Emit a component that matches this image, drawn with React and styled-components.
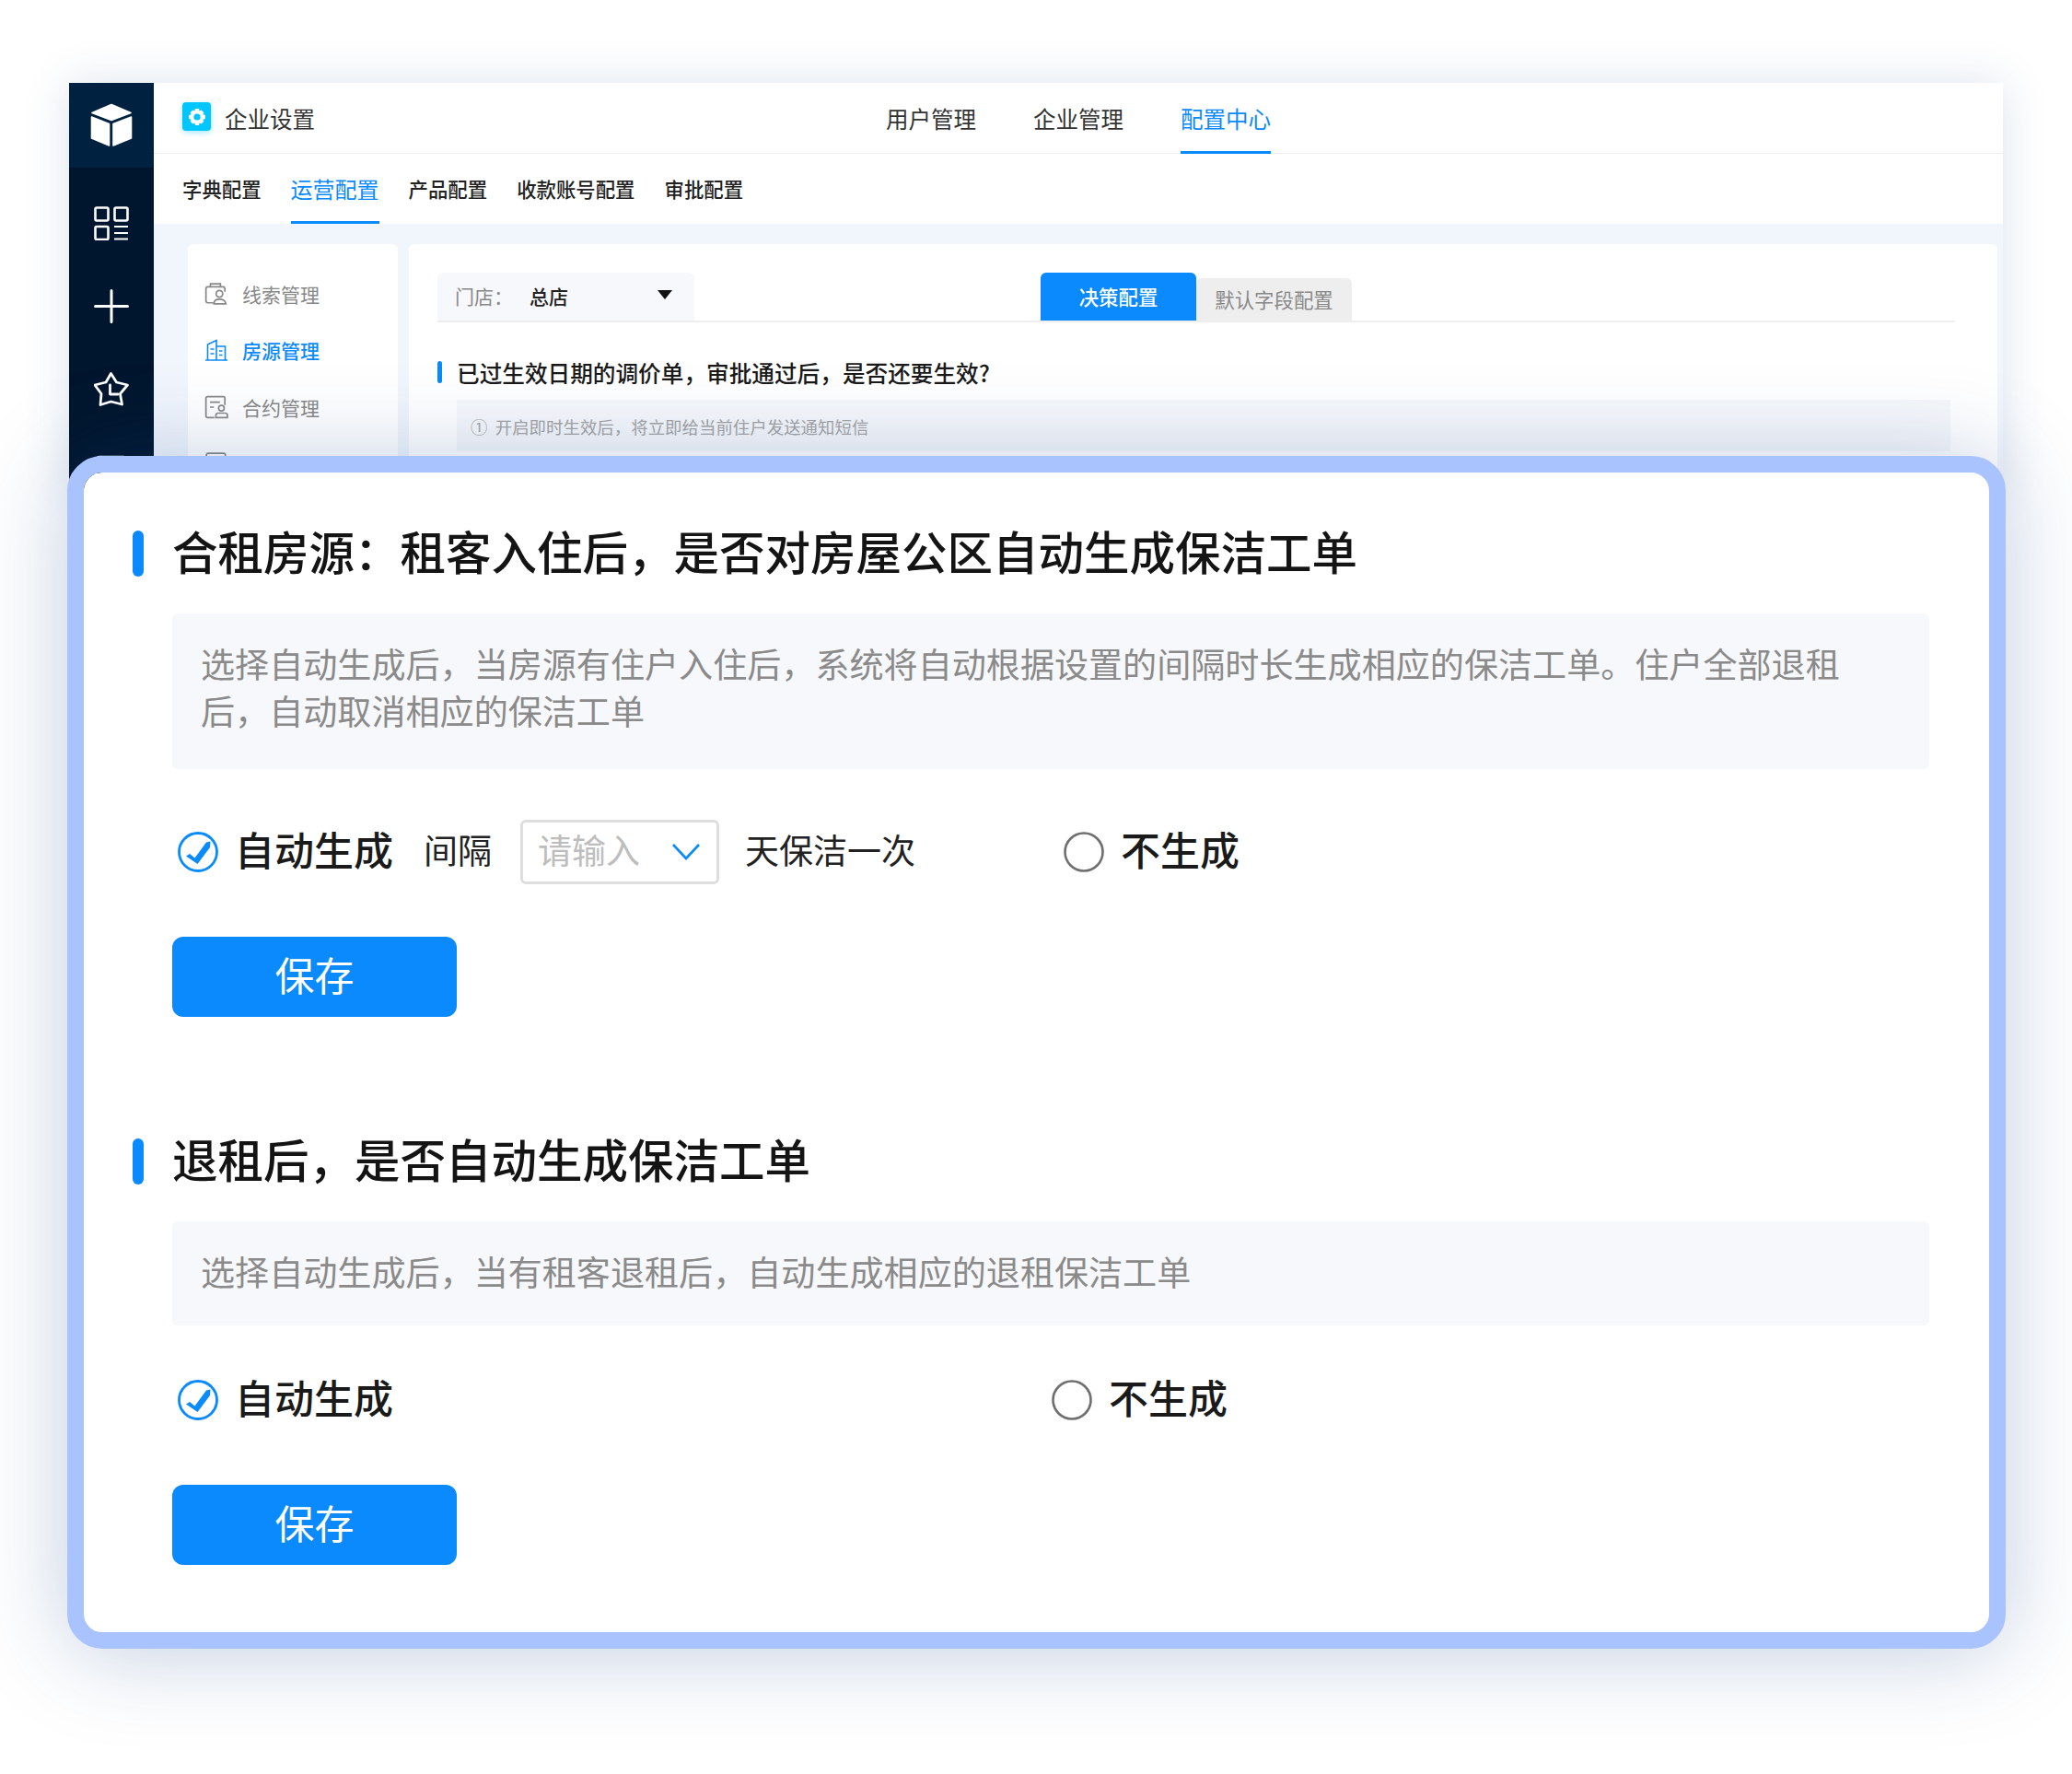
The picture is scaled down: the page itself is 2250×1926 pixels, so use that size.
import React from 'react';
import styled, { createGlobalStyle } from 'styled-components';

const Global = createGlobalStyle`
  html, body { margin: 0; padding: 0; background: #fff; }
  * { box-sizing: border-box; }
  body { font-family: "Noto Sans CJK SC", "Noto Sans", sans-serif; color: #1a1a1a; }
`;

const BLUE = '#0a8afc';

const Page = styled.div`
  width: 2250px;
  height: 1926px;
  padding: 90px 75px 0;
  overflow: hidden;
`;

/* ---------- back window ---------- */
const Win = styled.div`
  width: 2100px;
  height: 440px;
  display: flex;
  overflow: hidden;
  background: #f1f5fc;
  box-shadow: 0 0 46px rgba(40, 80, 140, 0.16);
`;
const Side = styled.aside`
  width: 92px;
  flex: none;
  background: #00162e;
  display: flex;
  flex-direction: column;
  align-items: center;
  overflow: hidden;
`;
const SideLogo = styled.div`
  width: 100%;
  height: 92px;
  flex: none;
  background: #00213f;
  display: flex;
  align-items: center;
  justify-content: center;
  margin-bottom: 42px;
`;
const SideIcon = styled.div`
  height: 37px;
  flex: none;
  margin-bottom: 53px;
  display: flex;
`;
const Main = styled.div`
  flex: 1;
  min-width: 0;
  display: flex;
  flex-direction: column;
`;
const Header = styled.header`
  height: 77px;
  background: #fff;
  border-bottom: 1px solid #eceef1;
  display: flex;
  justify-content: space-between;
  padding: 0 795px 0 31px;
`;
const Brand = styled.div`
  display: flex;
  align-items: center;
  gap: 15px;
  font-size: 24.5px;
  color: #333;
  line-height: 77px;
`;
const BrandMark = styled.div`
  width: 31px;
  height: 31px;
  border-radius: 4px;
  background: #00c6ff;
  box-shadow: 0 2px 6px rgba(0, 190, 255, 0.35);
  display: flex;
  align-items: center;
  justify-content: center;
  margin-top: -3px;
`;
const TopNav = styled.nav`
  display: flex;
  gap: 62px;
`;
const TopItem = styled.div`
  height: 77px;
  line-height: 78px;
  font-size: 24.5px;
  white-space: nowrap;
  color: ${p => (p.$on ? BLUE : '#333')};
  border-bottom: 3px solid ${p => (p.$on ? BLUE : 'transparent')};
`;
const SubNav = styled.nav`
  height: 76px;
  background: #fff;
  display: flex;
  align-items: stretch;
  gap: 32px;
  padding-left: 31px;
`;
const SubItem = styled.div`
  font-size: ${p => (p.$on ? '24px' : '21.4px')};
  font-weight: ${p => (p.$on ? 400 : 500)};
  line-height: 76px;
  height: 76px;
  white-space: nowrap;
  color: ${p => (p.$on ? BLUE : '#222')};
  border-bottom: 3px solid ${p => (p.$on ? BLUE : 'transparent')};
`;
const Body = styled.div`
  flex: 1;
  display: flex;
  gap: 12px;
  padding: 22px 6px 0 37px;
`;
const Menu = styled.div`
  width: 228px;
  flex: none;
  background: #fff;
  border-radius: 6px 6px 0 0;
  padding: 23px 0 0 18px;
`;
const MenuItem = styled.div`
  height: 61.5px;
  display: flex;
  align-items: center;
  gap: 15px;
  font-size: 21px;
  color: ${p => (p.$on ? BLUE : '#888')};
  font-weight: ${p => (p.$on ? 500 : 400)};
`;
const MenuGlyph = styled.svg`
  width: 26px;
  height: 26px;
  flex: none;
  fill: none;
  stroke: ${p => (p.$on ? BLUE : '#888')};
  stroke-width: 1.6;
`;
const Content = styled.div`
  flex: 1;
  background: #fff;
  border-radius: 6px 6px 0 0;
  padding: 31px 46px 0 31px;
`;
const TabBar = styled.div`
  height: 54px;
  display: flex;
  align-items: flex-end;
  border-bottom: 2px solid #eee;
`;
const Store = styled.div`
  width: 279px;
  height: 52px;
  background: #f7f8fb;
  border-radius: 6px 6px 0 0;
  display: flex;
  align-items: center;
  padding: 0 24px 2px 19px;
  font-size: 21px;
  color: #888;
`;
const StoreValue = styled.span`
  flex: 1;
  margin-left: 18px;
  color: #222;
  font-weight: 500;
`;
const Caret = styled.span`
  width: 0;
  height: 0;
  border-left: 8px solid transparent;
  border-right: 8px solid transparent;
  border-top: 10px solid #111;
  margin-top: -2px;
`;
const Tab = styled.div`
  height: ${p => (p.$on ? '52px' : '46px')};
  width: 169px;
  margin-left: ${p => p.$gap || 0}px;
  border-radius: 6px 6px 0 0;
  background: ${p => (p.$on ? BLUE : '#eeeeee')};
  color: ${p => (p.$on ? '#fff' : '#888')};
  font-size: 21.4px;
  font-weight: ${p => (p.$on ? 500 : 400)};
  text-align: center;
  line-height: ${p => (p.$on ? '52px' : '46px')};
`;
const Question = styled.div`
  margin-top: 42px;
  display: flex;
  align-items: center;
  gap: 16px;
  height: 24px;
  font-size: 24.65px;
  line-height: 22px;
  font-weight: 500;
  color: #1a1a1a;
  white-space: nowrap;
  &::before {
    content: '';
    width: 5px;
    height: 24px;
    border-radius: 3px;
    background: ${BLUE};
  }
`;
const Hint = styled.div`
  margin: 18px 5px 0 21px;
  height: 56px;
  background: #f7f8fb;
  padding-left: 15px;
  font-size: 18.45px;
  line-height: 58px;
  color: #a5a5a5;
  white-space: pre;
`;

/* ---------- foreground card ---------- */
const Card = styled.section`
  position: relative;
  z-index: 2;
  width: 2105px;
  height: 1295px;
  margin: -35px 0 0 -2px;
  border: 18px solid #a8c3fd;
  border-radius: 38px;
  background: #fff;
  background-clip: padding-box;
  box-shadow: 0 4px 100px rgba(25, 70, 140, 0.27);
  padding: 63px 65px 0 53px;
`;
const Title = styled.h2`
  margin: 0;
  height: 50px;
  display: flex;
  align-items: center;
  gap: 31px;
  font-weight: 500;
  color: #141414;
  white-space: nowrap;
  &::before {
    content: '';
    flex: none;
    width: 12px;
    height: 50px;
    border-radius: 6px;
    background: ${BLUE};
  }
`;
const TitleText = styled.span`
  font-size: 49.5px;
  line-height: 50px;
  margin-top: -7px;
`;
const Indent = styled.div`
  margin-left: 43px;
`;
const Desc = styled.div`
  margin-top: 40px;
  background: #f7f8fc;
  border-radius: 6px;
  padding: ${p => p.$pad};
  font-size: 37.1px;
  line-height: 51px;
  color: #8a8a8a;
`;
const ChoiceRow = styled.div`
  margin-top: ${p => p.$top}px;
  height: 70px;
  display: grid;
  grid-template-columns: ${p => p.$split}px auto;
  align-items: center;
`;
const ChoiceLeft = styled.div`
  display: flex;
  align-items: center;
  padding-left: 6px;
`;
const Choice = styled.div`
  display: flex;
  align-items: center;
  gap: 18px;
`;
const ChoiceLabel = styled.span`
  font-size: 43px;
  font-weight: 500;
  color: #1a1a1a;
  white-space: nowrap;
  line-height: 60px;
  margin-top: -8px;
`;
const Plain = styled.span`
  font-size: 37px;
  color: #222;
  white-space: nowrap;
  margin: ${p => p.$margin};
`;
const Picker = styled.div`
  width: 216px;
  height: 70px;
  border: 3px solid #dedede;
  border-radius: 6px;
  display: flex;
  align-items: center;
  justify-content: space-between;
  padding: 0 18px 0 16px;
  font-size: 37px;
  color: #bdbdbd;
`;
const PickerText = styled.span`
  margin-top: -7px;
`;
const SaveButton = styled.button`
  display: block;
  margin-top: 57px;
  width: 309px;
  height: 87px;
  border: 0;
  border-radius: 12px;
  background: ${BLUE};
  color: #fff;
  font-family: inherit;
  font-size: 43px;
  font-weight: 400;
  padding: 0 0 7px;
`;
const Spacer = styled.div`
  height: 132px;
`;

const Cube = () => (
  <svg width="46" height="48" viewBox="0 0 46 48" fill="#fff" stroke="#fff" strokeWidth="1.6" strokeLinejoin="round">
    <polygon points="23,1.5 44,10.5 23,18.5 2,10.5" />
    <polygon points="1.5,15 20.5,22.5 20.5,46 1.5,38" />
    <polygon points="25,22.5 44.5,15 44.5,38 25,46" />
  </svg>
);
const Gear = () => (
  <svg width="20" height="20" viewBox="0 0 20 20">
    <path fill="#fff" d="M8 1h4l.6 2.4 2-.9 2.8 2.8-1 2 2.6.7v4l-2.6.7 1 2-2.8 2.8-2-1L12 19H8l-.6-2.4-2 1-2.8-2.9 1-2L1 12V8l2.6-.7-1-2 2.8-2.8 2 .9z" />
    <circle cx="10" cy="10" r="3.6" fill="#00c6ff" />
  </svg>
);
const GridIcon = () => (
  <svg width="38" height="37" viewBox="0 0 38 37" fill="none" stroke="#fff" strokeWidth="2.6" strokeLinejoin="round">
    <rect x="1.5" y="1.5" width="14" height="14" rx="1.5" />
    <rect x="22.5" y="1.5" width="14" height="14" rx="1.5" />
    <rect x="1.5" y="22" width="14" height="14" rx="1.5" />
    <path d="M22 22h15M22 29h15M22 35.5h15" strokeWidth="2" />
  </svg>
);
const PlusIcon = () => (
  <svg width="38" height="37" viewBox="0 0 38 37" fill="none" stroke="#fff" strokeWidth="3" strokeLinecap="round">
    <path d="M19 1.5v34M1.5 18.500h35" />
  </svg>
);
const StarIcon = () => (
  <svg width="38" height="37" viewBox="0 0 38 37" fill="none" stroke="#fff" strokeWidth="2.8" strokeLinejoin="round" strokeLinecap="round">
    <path d="M18.500 1.500l6 9.500 12 3-8 9.500 2 11.500-12-3-11.500 3.500 1-12-7-9.500 12-3z" />
    <path d="M17.500 14v10h8.500" />
  </svg>
);
const BoxIcon = () => (
  <svg width="38" height="37" viewBox="0 0 38 37" fill="none" stroke="#fff" strokeWidth="2.6">
    <rect x="2" y="2" width="34" height="33" rx="4" />
  </svg>
);
const Lead = () => (
  <MenuGlyph viewBox="0 0 24 24">
    <path d="M9 21H3a2 2 0 0 1-1.500-2V7a2 2 0 0 1 1.500-2h16a2 2 0 0 1 1.500 2v3M6 5V2h10v3" />
    <circle cx="15" cy="12" r="3.300" />
    <path d="M9.500 22c0-3 2-4.500 5.500-4.500s6 1.500 6.500 4.500z" />
  </MenuGlyph>
);
const House = () => (
  <MenuGlyph $on viewBox="0 0 26 24">
    <path d="M1 23h24M3.500 23V6L13 1.500V23M13 8h9.500v15M6.500 11h4M6.500 16h4M16 13h3.500M16 17.500h3.500" />
  </MenuGlyph>
);
const Contract = () => (
  <MenuGlyph viewBox="0 0 24 24">
    <path d="M10 22.500H3a1.500 1.500 0 0 1-1.500-1.500V3A1.500 1.500 0 0 1 3 1.500h16A1.500 1.500 0 0 1 20.500 3v7M5.500 7h10M5.500 12h4" />
    <circle cx="17" cy="13" r="2.800" />
    <path d="M11.500 22.500v-2.500c0-1 1-2 2.500-2h6.500c1.500 0 2.500 1 2.500 2v2.500z" />
  </MenuGlyph>
);
const Doc = () => (
  <MenuGlyph viewBox="0 0 24 24">
    <rect x="2" y="2" width="19" height="20" rx="2" />
  </MenuGlyph>
);
const Checked = () => (
  <svg width="44" height="44" viewBox="0 0 44 44" style={{ flex: 'none' }}>
    <circle cx="22" cy="22" r="20.500" fill="none" stroke={BLUE} strokeWidth="2.800" />
    <path fill={BLUE} d="M9 26.500l4-2.500 5.500 4.500L31 11.500l4.500-1-.5 6.500-13.500 18z" />
  </svg>
);
const Unchecked = () => (
  <svg width="44" height="44" viewBox="0 0 44 44" style={{ flex: 'none' }}>
    <circle cx="22" cy="22" r="20.500" fill="none" stroke="#6f6f6f" strokeWidth="2.600" />
  </svg>
);
const Chevron = () => (
  <svg width="30" height="18" viewBox="0 0 30 18" fill="none" stroke={BLUE} strokeWidth="2.600">
    <path d="M1 1l14 15L29 1" />
  </svg>
);

export default function App() {
  return (
    <Page>
      <Global />
      <Win>
        <Side>
          <SideLogo><Cube /></SideLogo>
          <SideIcon><GridIcon /></SideIcon>
          <SideIcon><PlusIcon /></SideIcon>
          <SideIcon><StarIcon /></SideIcon>
          <SideIcon><BoxIcon /></SideIcon>
        </Side>
        <Main>
          <Header>
            <Brand>
              <BrandMark><Gear /></BrandMark>
              企业设置
            </Brand>
            <TopNav>
              <TopItem>用户管理</TopItem>
              <TopItem>企业管理</TopItem>
              <TopItem $on>配置中心</TopItem>
            </TopNav>
          </Header>
          <SubNav>
            <SubItem>字典配置</SubItem>
            <SubItem $on>运营配置</SubItem>
            <SubItem>产品配置</SubItem>
            <SubItem>收款账号配置</SubItem>
            <SubItem>审批配置</SubItem>
          </SubNav>
          <Body>
            <Menu>
              <MenuItem><Lead />线索管理</MenuItem>
              <MenuItem $on><House />房源管理</MenuItem>
              <MenuItem><Contract />合约管理</MenuItem>
              <MenuItem><Doc /></MenuItem>
            </Menu>
            <Content>
              <TabBar>
                <Store>门店：<StoreValue>总店</StoreValue><Caret /></Store>
                <Tab $on $gap={376}>决策配置</Tab>
                <Tab>默认字段配置</Tab>
              </TabBar>
              <Question>已过生效日期的调价单，审批通过后，是否还要生效?</Question>
              <Hint>①  开启即时生效后，将立即给当前住户发送通知短信</Hint>
            </Content>
          </Body>
        </Main>
      </Win>
      <Card>
        <Title><TitleText>合租房源：租客入住后，是否对房屋公区自动生成保洁工单</TitleText></Title>
        <Indent>
          <Desc $pad="29px 31px 38px">
            选择自动生成后，当房源有住户入住后，系统将自动根据设置的间隔时长生成相应的保洁工单。住户全部退租后，自动取消相应的保洁工单
          </Desc>
          <ChoiceRow $top={55} $split={968}>
            <ChoiceLeft>
              <Choice><Checked /><ChoiceLabel>自动生成</ChoiceLabel></Choice>
              <Plain $margin="-7px 31px 0 33px">间隔</Plain>
              <Picker><PickerText>请输入</PickerText><Chevron /></Picker>
              <Plain $margin="-7px 0 0 28px">天保洁一次</Plain>
            </ChoiceLeft>
            <Choice><Unchecked /><ChoiceLabel>不生成</ChoiceLabel></Choice>
          </ChoiceRow>
          <SaveButton>保存</SaveButton>
        </Indent>
        <Spacer />
        <Title><TitleText>退租后，是否自动生成保洁工单</TitleText></Title>
        <Indent>
          <Desc $pad="29px 31px 33px">选择自动生成后，当有租客退租后，自动生成相应的退租保洁工单</Desc>
          <ChoiceRow $top={46} $split={955}>
            <ChoiceLeft>
              <Choice><Checked /><ChoiceLabel>自动生成</ChoiceLabel></Choice>
            </ChoiceLeft>
            <Choice><Unchecked /><ChoiceLabel>不生成</ChoiceLabel></Choice>
          </ChoiceRow>
          <SaveButton>保存</SaveButton>
        </Indent>
      </Card>
    </Page>
  );
}
